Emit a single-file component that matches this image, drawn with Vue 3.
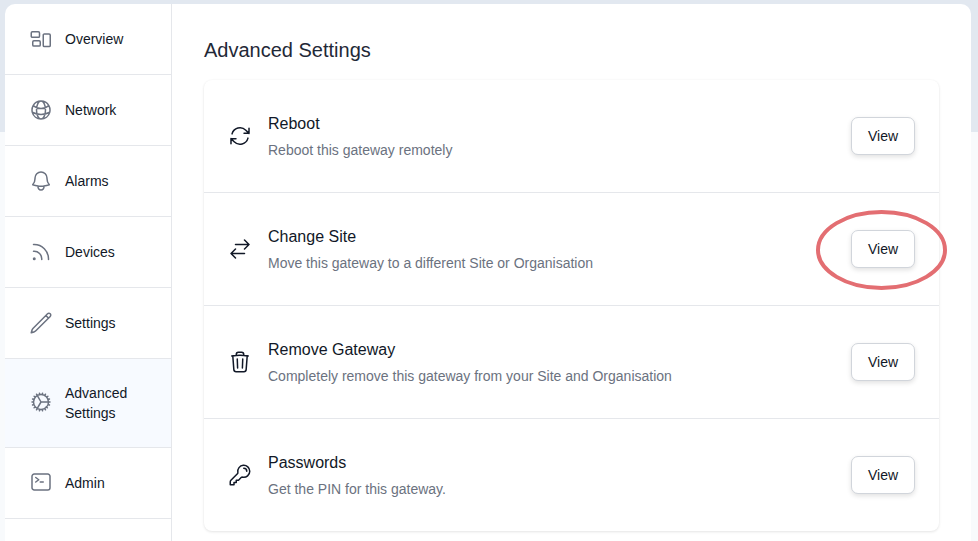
<script setup>
const nav = [
  { label: 'Overview', d: 'M2.25 5.875c0-.621.504-1.125 1.125-1.125h6c.621 0 1.125.504 1.125 1.125v3.25c0 .621-.504 1.125-1.125 1.125h-6a1.125 1.125 0 0 1-1.125-1.125v-3.25ZM14.25 8.125C14.25 7.504 14.754 7 15.375 7h4.75c.621 0 1.125.504 1.125 1.125v10.25c0 .621-.504 1.125-1.125 1.125h-4.75a1.125 1.125 0 0 1-1.125-1.125V8.125ZM3.75 14.875c0-.621.504-1.125 1.125-1.125h5.25c.621 0 1.125.504 1.125 1.125v3c0 .621-.504 1.125-1.125 1.125h-5.25a1.125 1.125 0 0 1-1.125-1.125v-3Z' },
  { label: 'Network', d: 'M12 21a9.004 9.004 0 0 0 8.716-6.747M12 21a9.004 9.004 0 0 1-8.716-6.747M12 21c2.485 0 4.5-4.03 4.5-9S14.485 3 12 3m0 18c-2.485 0-4.5-4.03-4.5-9S9.515 3 12 3m0 0a8.997 8.997 0 0 1 7.843 4.582M12 3a8.997 8.997 0 0 0-7.843 4.582m15.686 0A11.953 11.953 0 0 1 12 10.5c-2.998 0-5.74-1.1-7.843-2.918m15.686 0A8.959 8.959 0 0 1 21 12c0 .778-.099 1.533-.284 2.253m0 0A17.919 17.919 0 0 1 12 16.5c-3.162 0-6.133-.815-8.716-2.247m0 0A9.004 9.004 0 0 1 3 12c0-1.605.42-3.113 1.157-4.418' },
  { label: 'Alarms', d: 'M14.857 17.082a23.848 23.848 0 0 0 5.454-1.31A8.967 8.967 0 0 1 18 9.75V9A6 6 0 0 0 6 9v.75a8.967 8.967 0 0 1-2.312 6.022c1.733.64 3.56 1.085 5.455 1.31m5.714 0a24.255 24.255 0 0 1-5.714 0m5.714 0a3 3 0 1 1-5.714 0' },
  { label: 'Devices', d: 'M12.75 19.5v-.75a7.5 7.5 0 0 0-7.5-7.5H4.5m0-6.75h.75c7.87 0 14.25 6.38 14.25 14.25v.75M6 18.75a.75.75 0 1 1-1.5 0 .75.75 0 0 1 1.5 0Z' },
  { label: 'Settings', d: 'm16.862 4.487 1.687-1.688a1.875 1.875 0 1 1 2.652 2.652L6.832 19.82a4.5 4.5 0 0 1-1.897 1.13l-2.685.8.8-2.685a4.5 4.5 0 0 1 1.13-1.897L16.863 4.487Zm0 0L19.5 7.125' },
  { label: 'Advanced Settings', active: true, d: 'M4.5 12a7.5 7.5 0 0 0 15 0m-15 0a7.5 7.5 0 1 1 15 0m-15 0H3m16.5 0H21m-1.5 0H12m-8.457 3.077 1.41-.513m14.095-5.13 1.41-.513M5.106 17.785l1.149-.964m11.49-9.642 1.149-.964M7.501 19.795l.75-1.3m7.5-12.99.75-1.3m-6.063 16.658.26-1.477m2.605-14.772.26-1.477m0 17.726-.26-1.477M10.698 4.614l-.26-1.477M16.5 19.794l-.75-1.299M7.5 4.205 12 12m6.364 5.785-1.149-.964M6.256 7.178l-1.15-.964m15.352 8.864-1.41-.513M4.954 9.435l-1.41-.514M12.002 12l-3.75 6.495' },
  { label: 'Admin', d: 'm6.75 6.5 3 2.25-3 2.25m4.5 0h3m-9 8h13.5A2.25 2.25 0 0 0 21 16.75V5.25A2.25 2.25 0 0 0 18.75 3H5.25A2.25 2.25 0 0 0 3 5.25v11.5A2.25 2.25 0 0 0 5.25 19Z' },
  { label: '', d: '' },
]
const rows = [
  { title: 'Reboot', desc: 'Reboot this gateway remotely', d: 'M16.023 9.348h4.992v-.001M2.985 19.644v-4.992m0 0h4.992m-4.993 0 3.181 3.183a8.25 8.25 0 0 0 13.803-3.7M4.031 9.865a8.25 8.25 0 0 1 13.803-3.7l3.181 3.182m0-4.991v4.99' },
  { title: 'Change Site', desc: 'Move this gateway to a different Site or Organisation', d: 'M7.5 21 3 16.5m0 0L7.5 12M3 16.5h13.5m0-13.5L21 7.5m0 0L16.5 12M21 7.5H7.5', circled: true },
  { title: 'Remove Gateway', desc: 'Completely remove this gateway from your Site and Organisation', d: 'm14.74 9-.346 9m-4.788 0L9.26 9m9.968-3.21c.342.052.682.107 1.022.166m-1.022-.165L18.16 19.673a2.25 2.25 0 0 1-2.244 2.077H8.084a2.25 2.25 0 0 1-2.244-2.077L4.772 5.79m14.456 0a48.108 48.108 0 0 0-3.478-.397m-12 .562c.34-.059.68-.114 1.022-.165m0 0a48.11 48.11 0 0 1 3.478-.397m7.5 0v-.916c0-1.18-.91-2.164-2.09-2.201a51.964 51.964 0 0 0-3.32 0c-1.18.037-2.09 1.022-2.09 2.201v.916m7.5 0a48.667 48.667 0 0 0-7.5 0' },
  { title: 'Passwords', desc: 'Get the PIN for this gateway.', d: 'M15.75 5.25a3 3 0 0 1 3 3m3 0a6 6 0 0 1-7.029 5.912c-.563-.097-1.159.026-1.563.43L10.5 17.25H8.25v2.25H6v2.25H2.25v-2.818c0-.597.237-1.17.659-1.591l6.499-6.499c.404-.404.527-1 .43-1.563A6 6 0 1 1 21.75 8.25Z' },
]
</script>

<template>
  <div class="page">
    <div class="panel">
      <nav class="side">
        <a v-for="(n, i) in nav" :key="i" class="nav" :class="{ active: n.active, last: !n.label }">
          <svg v-if="n.d" class="ic nav-ic" viewBox="0 0 24 24" fill="none" stroke="currentColor" stroke-width="1.5" stroke-linecap="round" stroke-linejoin="round"><path :d="n.d" /></svg>
          <span>{{ n.label }}</span>
        </a>
      </nav>
      <main class="main">
        <h1>Advanced Settings</h1>
        <section class="card">
          <div v-for="r in rows" :key="r.title" class="row">
            <svg class="ic row-ic" viewBox="0 0 24 24" fill="none" stroke="currentColor" stroke-width="1.5" stroke-linecap="round" stroke-linejoin="round"><path :d="r.d" /></svg>
            <div class="txt">
              <div class="title">{{ r.title }}</div>
              <div class="desc">{{ r.desc }}</div>
            </div>
            <div class="btn-wrap">
              <button class="btn">View</button>
              <svg v-if="r.circled" class="ring" viewBox="0 0 134 82" fill="none"><ellipse cx="65.5" cy="40" rx="63.5" ry="38" stroke="#e36e72" stroke-width="4" /></svg>
            </div>
          </div>
        </section>
      </main>
    </div>
  </div>
</template>

<style scoped>
.page {
  height: 541px;
  overflow: hidden;
  box-sizing: border-box;
  padding: 4px 7px 0 5px;
  background: linear-gradient(#e2e8f0 132px, #f8fafc 132px);
  font-family: "Liberation Sans", Arial, sans-serif;
  color: #111827;
}
.panel {
  display: flex;
  height: 600px;
  background: #fff;
  border-radius: 10px 10px 0 0;
  overflow: hidden;
}
.side {
  flex: none;
  width: 166px;
  border-right: 1px solid #e5e7eb;
  display: flex;
  flex-direction: column;
}
.nav {
  flex: none;
  height: 70px;
  box-sizing: content-box;
  display: flex;
  align-items: center;
  gap: 12px;
  padding-left: 24px;
  padding-right: 16px;
  border-bottom: 1px solid #e5e7eb;
  font-size: 14px;
  line-height: 20px;
}
.nav.active {
  height: 88px;
  background: #f7faff;
}
.nav.active .nav-ic {
  margin-bottom: 2px;
}
.ic {
  flex: none;
  width: 24px;
  height: 24px;
}
.nav-ic {
  color: #6b7280;
}
.main {
  flex: 1;
  min-width: 0;
  padding: 32px 32px 0;
}
h1 {
  margin: 0 0 16px;
  font-size: 20px;
  line-height: 28px;
  font-weight: 400;
  color: #1f2937;
}
.card {
  background: #fff;
  border-radius: 8px;
  box-shadow: 0 1px 3px rgba(0, 0, 0, 0.1), 0 0 2px rgba(0, 0, 0, 0.03);
}
.row {
  height: 112px;
  display: flex;
  align-items: center;
  gap: 16px;
  padding: 0 24px;
  border-bottom: 1px solid #e5e7eb;
}
.row:last-child {
  border-bottom: none;
}
.row-ic {
  color: #111827;
}
.txt {
  flex: 1;
  min-width: 0;
  margin-top: -1px;
}
.title {
  font-size: 16px;
  line-height: 24px;
  color: #111827;
}
.desc {
  margin-top: 4px;
  font-size: 14px;
  line-height: 20px;
  color: #6b7280;
}
.btn-wrap {
  position: relative;
  flex: none;
}
.btn {
  display: block;
  width: 64px;
  height: 38px;
  padding: 0;
  background: #fff;
  border: 1px solid #d1d5db;
  border-radius: 7px;
  box-shadow: 0 2px 5px rgba(0, 0, 0, 0.12);
  font: 14px/20px "Liberation Sans", Arial, sans-serif;
  color: #111827;
}
.ring {
  position: absolute;
  left: -35px;
  top: -20px;
  width: 134px;
  height: 82px;
  pointer-events: none;
}
</style>
